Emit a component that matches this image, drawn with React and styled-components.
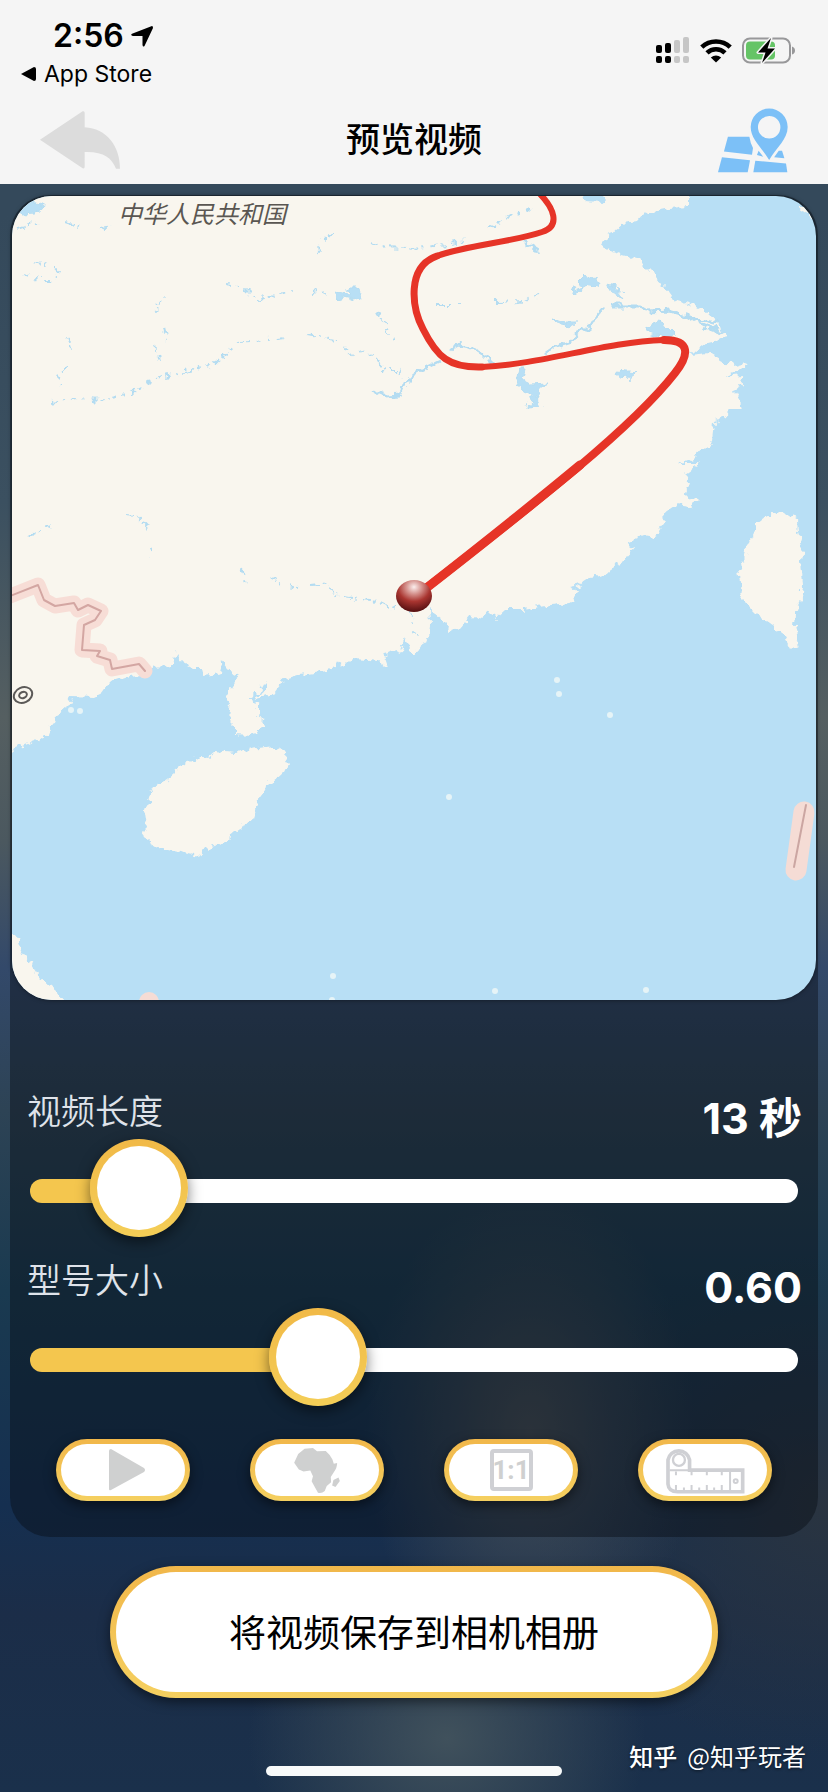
import { useState } from 'react'
import styled, { createGlobalStyle } from 'styled-components'

const GlobalStyle = createGlobalStyle`
    * {
        box-sizing: border-box;
    }
    body {
        margin: 0;
        font-family: Inter, "Noto Sans CJK SC", sans-serif;
    }
    button {
        font-family: inherit;
        cursor: pointer;
    }
    svg {
        display: block;
    }
`
const Page = styled.div`
    min-height: 100vh;
    display: flex;
    flex-direction: column;
    background:
        radial-gradient(ellipse 24% 10% at 54% 97%, #40515c, transparent),
        radial-gradient(ellipse 20% 14% at 64% 80%, #454e56, transparent),
        radial-gradient(ellipse 36% 14% at 100% 84%, #2a3440, transparent),
        linear-gradient(#34495b 12%, #3b5060 28%, #555f61 40%, #4b585f 47%, #33496a 54%, #2d4355 62%, #1a3a50 72%, #152f50 84%, #1b2d48 90%, #1a304b);
`
const Header = styled.header`
    background-color: #f5f5f5;
`
const StatusBar = styled.div`
    display: flex;
    justify-content: space-between;
    height: 98px;
    padding: 14px 32px 0 21px;
`
const Clock = styled.div`
    display: flex;
    align-items: center;
    gap: 7px;
    padding-left: 32px;
    font-size: 32px;
    line-height: 44px;
    font-weight: 600;
`
const StoreLink = styled.a`
    display: flex;
    align-items: center;
    gap: 8px;
    font-size: 23px;
    line-height: 32px;
    color: black;
    text-decoration: none;
`
const StatusIcons = styled.div`
    display: flex;
    align-items: center;
    gap: 10px;
    height: 72px;
`
const Nav = styled.nav`
    display: grid;
    grid-template-columns: 1fr auto 1fr;
    align-items: center;
    height: 86px;
    padding: 0 40px 2px;
`
const Title = styled.h1`
    margin: 0;
    font-size: 34px;
    line-height: 48px;
    font-weight: 500;
`
const IconButton = styled.button`
    justify-self: ${props => props.$end ? "end" : "start"};
    padding: 0;
    border: none;
    background: none;
`
const Panel = styled.main`
    margin: 11px 10px 0;
    padding: 1px 2px 36px;
    border-radius: 40px;
    background-color: rgba(8,12,18,0.42);
`
const MapView = styled.div`
    aspect-ratio: 1;
    border-radius: 40px;
    overflow: hidden;
    background-color: #b8dff5;
    box-shadow: 0 0 4px rgba(0,0,0,0.5);

    svg {
        width: 100%;
        height: 100%;
    }
`
const Controls = styled.div`
    display: flex;
    flex-direction: column;
    gap: 58px;
    padding: 92px 14px 0 15px;
`
const FieldHead = styled.div`
    display: flex;
    justify-content: space-between;
    align-items: flex-start;
`
const Label = styled.label`
    font-size: 34px;
    line-height: 40px;
    font-weight: 350;
    color: #dfe3ea;
`
const Value = styled.output`
    font-size: 43px;
    line-height: 52px;
    font-weight: 700;
    color: white;
`
const Range = styled.input`
    appearance: none;
    display: block;
    width: calc(100% - 7px);
    height: 24px;
    margin: 35px 4px 0 3px;
    background: none;

    &::-webkit-slider-runnable-track {
        height: 24px;
        border-radius: 12px;
        background: linear-gradient(to right, #f4c64e var(--fill), white var(--fill));
    }
    &::-webkit-slider-thumb {
        appearance: none;
        width: 98px;
        height: 98px;
        margin-top: -40px;
        border: 7px solid transparent;
        border-radius: 50%;
        background:
            linear-gradient(white, white) padding-box,
            linear-gradient(#f1b947, #f4ce57) border-box;
        box-shadow: 0 5px 14px rgba(0,0,0,0.5);
    }
`
const Tools = styled.div`
    display: flex;
    justify-content: space-between;
    padding: 67px 44px 0;
`
const PillButton = styled.button`
    display: flex;
    align-items: center;
    justify-content: center;
    padding: 0;
    border: 5px solid transparent;
    border-radius: 66px;
    background:
        linear-gradient(white, white) padding-box,
        linear-gradient(#f1b74a, #f5d060) border-box;
    box-shadow: 0 4px 12px rgba(0,0,0,0.5);
`
const ToolButton = styled(PillButton)`
    width: 134px;
    height: 62px;
    color: #cfd0d0;
`
const Ratio = styled.span`
    width: 43px;
    height: 42px;
    border: 4px solid #cfd0d4;
    border-radius: 4px;
    font-family: Roboto, sans-serif;
    font-size: 26px;
    line-height: 34px;
    font-weight: 700;
    display: flex;
    justify-content: center;
`
const SaveButton = styled(PillButton)`
    align-self: center;
    width: calc(100% - 220px);
    height: 132px;
    margin-top: 29px;
    padding-top: 4px;
    border-width: 6px;
    font-size: 37px;
    line-height: 52px;
    color: black;
`
const Footer = styled.footer`
    display: grid;
    grid-template-columns: 1fr 296px 1fr;
    height: 52px;
    margin-top: 42px;
    padding: 0 22px;
`
const HomeBar = styled.div`
    grid-column: 2;
    align-self: end;
    height: 10px;
    margin-bottom: 16px;
    border-radius: 5px;
    background-color: #f8fafa;
`
const Credit = styled.div`
    justify-self: end;
    display: flex;
    gap: 10px;
    font-size: 24px;
    line-height: 32px;
    color: white;
    white-space: nowrap;
    font-family: "Noto Sans CJK SC", sans-serif;
    text-shadow: 0 1px 3px rgba(0,0,0,0.6);
`
const Brand = styled.span`
    font-weight: 500;
`

const Signal = () => (
    <svg width="34" height="27" viewBox="0 0 34 27">
        <g fill="#000">
            <rect x="0" y="8" width="6" height="8" rx="2" />
            <rect x="9" y="6" width="6" height="10" rx="2" />
            <rect x="0" y="19" width="6" height="7" rx="2" />
            <rect x="9" y="19" width="6" height="7" rx="2" />
        </g>
        <g fill="#c6c6c6">
            <rect x="18" y="3" width="6" height="13" rx="2" />
            <rect x="27" y="0" width="6" height="16" rx="2" />
            <rect x="18" y="19" width="6" height="7" rx="2" />
            <rect x="27" y="19" width="6" height="7" rx="2" />
        </g>
    </svg>
)

const Wifi = () => (
    <svg width="32" height="25" viewBox="0 0 32 25">
        <g fill="none" stroke="#000" strokeWidth="4.6">
            <path d="M1.800 9.200 A20.500 20.500 0 0 1 30.200 9.200" />
            <path d="M7 14.800 A13 13 0 0 1 25 14.800" />
        </g>
        <path d="M16 24.500 L10.800 19.400 Q16 15.500 21.200 19.400Z" />
    </svg>
)

const Battery = () => (
    <svg width="54" height="27" viewBox="0 0 54 27">
        <rect x="1" y="1.500" width="47" height="24" rx="7" fill="none" stroke="#98989a" strokeWidth="2" />
        <path d="M50 9.500 Q53 10.500 53 13.500 Q53 16.500 50 17.500Z" fill="#98989a" />
        <rect x="4" y="4.500" width="29" height="18" rx="4" fill="#65c466" />
        <path d="M29 1 L16 15.500 H23.500 L20 26 L33 11.500 H25.500Z" fill="#000" stroke="#f5f5f5" strokeWidth="3" paintOrder="stroke" strokeLinejoin="round" />
    </svg>
)

const BackIcon = () => (
    <svg width="80" height="58" viewBox="120 335 240 174" fill="#dcdcdc">
        <path d="M120 421 L248 336 Q254 334 254 341 V384 C320 388 360 440 360 508 H348 C335 475 310 456 254 458 V502 Q254 509 248 507Z" />
    </svg>
)

const PlacesIcon = () => (
    <svg width="70" height="65" viewBox="908 321 212 196" fill="#7cc0f7">
        <path d="M938 408 H1003 Q1006 428 1014 442 L1011 462 L926 452Z" />
        <path d="M920 470 L1005 479 L998 515 H908Z" />
        <path d="M1021 480 L1114 489 L1118 515 H1015Z" />
        <path d="M1026 463 L1031 450 L1045 468Z" />
        <path d="M1092 450 H1102 L1109 473 L1078 470Z" />
        <path fillRule="evenodd" d="M1063 322 A56 56 0 0 1 1119 378 C1119 415 1085 440 1063 478 C1041 440 1007 415 1007 378 A56 56 0 0 1 1063 322Z M1063 345 A34 34 0 1 0 1063 413 A34 34 0 1 0 1063 345Z" />
    </svg>
)

const PlayIcon = () => (
    <svg width="44" height="42" viewBox="-8 0 44 42" fill="currentColor">
        <path d="M0 2 Q0 0 2 0 L35 19 Q37 21 35 23 L2 41 Q0 42 0 40Z" />
    </svg>
)

const AfricaIcon = () => (
    <svg width="46" height="45" viewBox="794 86 136 134" fill="currentColor">
        <path d="M825 88 L850 86 L862 96 L888 95 Q903 108 908 120 L912 133 L922 131 Q922 146 912 158 L903 172 L904 188 L891 199 L885 214 Q876 222 865 219 L857 205 L846 185 L850 170 L842 153 L822 156 L808 150 L794 130 L806 104Z" />
        <path d="M911 181 L926 174 L930 184 L917 202 L907 198Z" />
    </svg>
)

const TapeIcon = () => (
    <svg width="79" height="47" viewBox="755 74 238 140" fill="none" stroke="#cfd0d4" strokeWidth="11">
        <path d="M761 112 V185 Q763 208 790 208 H986 V143 H826 V112 A33 33 0 0 0 761 112Z" />
        <circle cx="794" cy="112" r="18" strokeWidth="7" />
        <path d="M766 143 H826 M948 145 V205" strokeWidth="6" />
        <circle cx="965" cy="176" r="6" strokeWidth="6" />
        <path d="M785 147 V158 M832 147 V158 M878 147 V158 M923 147 V158 M785 204 V188 M809 204 V195 M832 204 V188 M855 204 V195 M878 204 V188 M900 204 V195 M923 204 V188" strokeWidth="6" />
    </svg>
)

const mainland = `M0 180 H579 L585 202 L603 203 L609 180 H687 V206 L671 208 L656 211 L644 214 L638 221 L630 222
    L621 223 L617 230 L606 238 L601 247 L612 252 L638 259 L655 276 L664 286 L674 300 L694 306 L712 315
    L720 328 L727 338 L707 343 L691 355 L710 353 L725 362 L735 366 L749 362 L740 370 L724 377 L742 375
    L743 385 L733 390 L739 400 L742 410 L730 410 L727 417 L714 422 L712 440 L704 448 L695 458 L679 464
    L698 464 L685 473 L690 484 L684 490 L688 497 L700 501 L690 507 L677 505 L664 514 L665 522 L655 537
    L644 535 L627 542 L635 547 L624 562 L612 566 L606 575 L590 577 L580 585 L570 587 L579 590 L571 603
    L550 605 L524 610 L505 610 L495 619 L490 611 L478 619 L470 616 L460 628 L447 633 L448 626 L440 618
    L430 610 L431 625 L430 638 L420 644 L414 654 L405 640 L400 651 L385 655 L389 667 L378 661 L370 660
    L350 659 L343 666 L338 660 L336 668 L315 672 L298 674 L285 678 L275 690 L270 697 L253 699 L267 690
    L267 679 L261 690 L250 698 L251 704 L259 706 L259 716 L265 724 L258 733 L250 735 L235 734 L235 727
    L230 722 L231 710 L226 703 L228 692 L235 680 L240 676 L231 672 L223 661 L220 672 L205 675 L203 668
    L195 668 L183 662 L176 653 L173 666 L155 668 L150 674 L130 676 L110 683 L103 693 L95 697 L71 696
    L67 708 L55 718 L48 735 L30 742 L0 755Z`

const islands = [
    'M187 762 L195 757 L207 759 L215 752 L235 754 L250 749 L273 746 L285 752 L288 762 L283 772 L269 785 L258 800 L252 820 L235 832 L220 845 L205 848 L199 857 L180 853 L160 848 L143 838 L147 825 L145 812 L150 795 L155 787 L167 779Z',
    'M779 512 L798 518 L799 533 L803 545 L801 560 L803 585 L800 603 L795 614 L794 626 L798 646 L791 648 L784 634 L770 624 L757 614 L748 605 L740 597 L742 585 L739 570 L744 558 L750 540 L758 523 L768 515Z',
    'M0 925 L17 936 L19 947 L28 960 L40 978 L55 990 L68 1004 L0 1010Z',
    'M797 206 L820 222 L820 206Z',
]

const rivers = [
    'M51 402 L78 398 L100 400 L130 394 L160 377 L195 370 L215 363 L240 342 L285 337',
    'M307 335 L340 341 L352 355 L362 351 L375 355 L384 370 L400 370 L403 380',
    'M17 229 L38 222 M66 223 L78 227 M100 229 L111 227',
    'M34 261 L50 265 L57 271 L54 280 L42 280 L25 273',
    'M225 284 L244 287 L256 300 L270 297 L294 290 M312 293 L328 291',
    'M162 299 L153 313 M164 328 L167 340 M155 346 L158 361',
    'M68 336 L72 349 M66 366 L58 380 L60 385',
    'M28 537 L44 530 L51 526 M126 515 L136 516 L150 530 M154 547 L149 557',
    'M242 570 L247 584 M270 578 L286 586 L300 588 M312 585 L330 583 L334 595 L350 598 L380 601 L395 608',
    'M332 232 L319 246 L320 252 M371 243 L385 247 L400 248 L435 247 L466 241',
    'M376 311 L388 328 L394 345',
    'M489 228 L510 216 L533 208 M437 305 L462 305 M495 302 L520 301 L540 296',
    'M410 610 L412 625 L418 635',
]

// the lower course is drawn solid, the upper one breaks up into dashes
const wideRivers = [
    'M372 391 L385 396 L400 395 L405 383 L414 374 L440 361',
    'M450 350 L458 345 L472 348 L484 355 L492 363',
    'M546 353 L556 346 L570 342 L577 333 L590 328 L597 316 L605 307',
    'M612 306 L638 306 L648 312 L670 311 L690 317 L718 324 M690 317 L705 326 L722 332',
    'M523 242 L540 252',
]

const lakes = [
    'M577 283 L586 274 L600 282 L597 288 L584 286Z M571 290 L582 286 L578 292Z M606 284 L614 285 L624 298 L612 293Z',
    'M554 320 L565 322 L578 322 L570 326 L557 323Z',
    'M648 326 L658 322 L668 328 L676 336 L660 337 L648 333Z',
    'M520 368 L525 368 L522 380 L530 384 L547 383 L541 392 L536 396 L541 407 L528 408 L531 396 L521 390 L517 380Z',
    'M617 370 L637 372 L630 377 L620 378Z',
    'M335 292 L350 294 L348 288 L358 288 L362 296 L354 300 L345 298 L338 300Z',
    'M12 204 L30 200 L43 205 L42 212 L24 214 L12 210Z',
]

const islets = [[557, 676], [559, 690], [610, 711], [449, 793], [333, 972], [495, 987], [332, 996], [646, 986], [71, 706], [80, 707]]

const border = 'M5 598 L38 585 L44 600 L55 606 L74 603 L78 610 L88 605 L101 611 L95 620 L84 625 L82 650 L100 651 L97 656 L110 660 L112 669 L139 664 L145 671'

const RouteMap = () => (
    <svg viewBox="12 196 804 804" role="img" aria-label="路线地图">
        <defs>
            <filter id="coast" x="-5%" y="-5%" width="110%" height="110%">
                <feTurbulence type="fractalNoise" baseFrequency="0.14" numOctaves="2" seed="4" />
                <feDisplacementMap in="SourceGraphic" scale="11" xChannelSelector="R" yChannelSelector="G" />
            </filter>
            <radialGradient id="ball" cx="50%" cy="22%" r="75%">
                <stop offset="0" stopColor="#fbeeed" />
                <stop offset="0.300" stopColor="#d4908b" />
                <stop offset="0.600" stopColor="#a93530" />
                <stop offset="1" stopColor="#5a1213" />
            </radialGradient>
        </defs>
        <g fill="#f9f6ee" filter="url(#coast)">
            <path d={mainland} />
            {islands.map(d => <path key={d} d={d} />)}
        </g>
        <g filter="url(#coast)" fill="none" stroke="#b4dcf1">
            {rivers.map(d => <path key={d} d={d} strokeWidth="2" strokeDasharray="7 4 3 6" />)}
            {wideRivers.map(d => <path key={d} d={d} strokeWidth="3" />)}
            {lakes.map(d => <path key={d} d={d} fill="#b8dff5" />)}
        </g>
        {islets.map(([x, y]) => <circle key={y} cx={x} cy={y + 4} r="3" fill="#e6f4f7" />)}
        <g fill="none" strokeLinecap="round" strokeLinejoin="round">
            <path d={border} stroke="#f7ddd6" strokeWidth="15" />
            <path d={border} stroke="#d3a6a2" strokeWidth="2" />
            <path d="M804 812 L796 870" stroke="#f5dcd5" strokeWidth="21" />
            <path d="M806 805 L794 867" stroke="#cba6a2" strokeWidth="2" />
        </g>
        <circle cx="149" cy="1002" r="10" fill="#f5dcd5" />
        <g fill="none" stroke="#5c5a58" strokeWidth="2" transform="rotate(-25 23 695)">
            <ellipse cx="23" cy="695" rx="9.500" ry="7.500" />
            <ellipse cx="23" cy="695" rx="4" ry="3" />
        </g>
        <text x="118" y="223" fill="#5a5652" fontSize="24" fontStyle="italic" fontFamily="Noto Sans CJK SC, sans-serif">中华人民共和国</text>
        <g fill="none" stroke="#e63427" strokeLinecap="round">
            <path d="M539 193 C554 208 561 226 542 232 C513 242 468 245 437 256" strokeWidth="6" />
            <path d="M437 256 C406 267 412 308 423 329 C437 357 449 368 482 367" strokeWidth="7" />
            <path d="M482 367 C545 364 603 342 664 340" strokeWidth="6" />
            <path d="M664 340 C690 340 690 354 675 373 C633 427 541 499 420 593" strokeWidth="8" />
            <path d="M580 465 Q510 523 420 593" strokeWidth="9" />
        </g>
        <ellipse cx="414" cy="596" rx="18" ry="16" fill="url(#ball)" />
    </svg>
)

const Slider = ({ id, label, text, value, min, max, step, onChange }) => {
    const part = (value - min) / (max - min)

    return (
        <div>
            <FieldHead>
                <Label htmlFor={id}>{label}</Label>
                <Value htmlFor={id}>{text}</Value>
            </FieldHead>
            <Range
                id={id}
                type="range"
                min={min}
                max={max}
                step={step}
                value={value}
                onChange={e => onChange(Number(e.target.value))}
                style={{ '--fill': `calc(49px + (100% - 98px) * ${part})` }}
            />
        </div>
    )
}

const App = () => {
    const [seconds, setSeconds] = useState(13)
    const [size, setSize] = useState(0.6)

    return (
        <Page>
            <GlobalStyle />
            <Header>
                <StatusBar>
                    <div>
                        <Clock>
                            2:56
                            <svg width="22" height="21" viewBox="0 0 22 21">
                                <path d="M21 0 Q22 0 22 2 L13.500 20 Q12 21.500 11.500 19 V10 H2 Q-1 9 1 7.800Z" />
                            </svg>
                        </Clock>
                        <StoreLink href="#">
                            <svg width="15" height="14" viewBox="0 0 15 14">
                                <path d="M0 7 L13 0 Q15 0 15 2 V12 Q15 14 13 14Z" />
                            </svg>
                            App Store
                        </StoreLink>
                    </div>
                    <StatusIcons>
                        <Signal />
                        <Wifi />
                        <Battery />
                    </StatusIcons>
                </StatusBar>
                <Nav>
                    <IconButton aria-label="返回"><BackIcon /></IconButton>
                    <Title>预览视频</Title>
                    <IconButton $end aria-label="地图"><PlacesIcon /></IconButton>
                </Nav>
            </Header>
            <Panel>
                <MapView><RouteMap /></MapView>
                <Controls>
                    <Slider id="length" label="视频长度" text={`${seconds} 秒`} value={seconds} min={3} max={115} step={1} onChange={setSeconds} />
                    <Slider id="size" label="型号大小" text={size.toFixed(2)} value={size} min={0.1} max={1.5} step={0.05} onChange={setSize} />
                </Controls>
                <Tools>
                    <ToolButton aria-label="播放"><PlayIcon /></ToolButton>
                    <ToolButton aria-label="地区"><AfricaIcon /></ToolButton>
                    <ToolButton><Ratio>1:1</Ratio></ToolButton>
                    <ToolButton aria-label="距离"><TapeIcon /></ToolButton>
                </Tools>
            </Panel>
            <SaveButton>将视频保存到相机相册</SaveButton>
            <Footer>
                <HomeBar />
                <Credit><Brand>知乎</Brand><span>@知乎玩者</span></Credit>
            </Footer>
        </Page>
    )
}

export default App
